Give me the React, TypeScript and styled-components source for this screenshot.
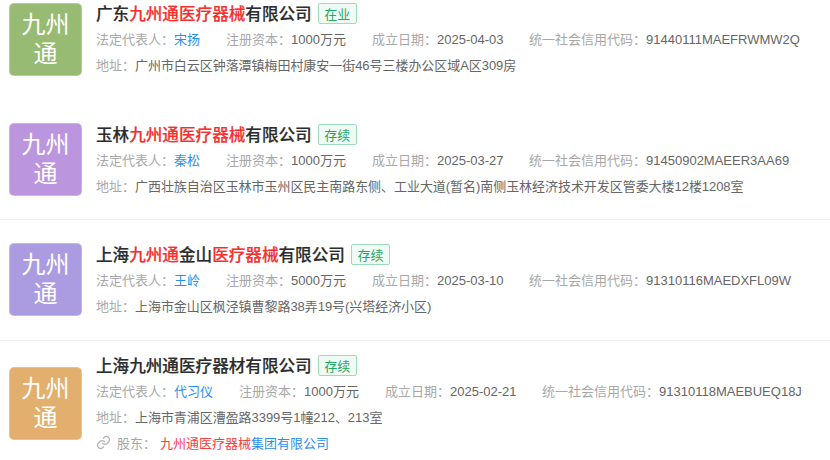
import React from "react";
import styled, { createGlobalStyle } from "styled-components";

const Global = createGlobalStyle`
  html, body { margin: 0; padding: 0; background: #fff; }
  body { width: 830px; height: 460px; overflow: hidden; font-family: "Noto Sans CJK SC", "Liberation Sans", sans-serif; }
`;
const List = styled.div`
  width: 830px; height: 460px; overflow: hidden; display: flex; flex-direction: column;
`;
const Row = styled.div<{ $h: number; $line?: boolean; $top: number }>`
  height: ${p => p.$h}px; flex: none; box-sizing: border-box; display: flex; align-items: flex-start; gap: 14px;
  padding: ${p => p.$top}px 0 0 9px;
  border-bottom: ${p => (p.$line ? "1px solid #eeeeee" : "none")};
`;
const Logo = styled.div<{ $c: string; $mt: number }>`
  width: 73px; height: 73px; flex: none; box-sizing: border-box; margin-top: ${p => p.$mt}px; border-radius: 5px; background: ${p => p.$c};
  border: 1px solid rgba(255,255,255,0.25); color: #fff; font-size: 24px; line-height: 29px; text-align: center;
  padding: 4px 8px 0;
`;
const Body = styled.div<{ $mt: number }>`
  display: flex; flex-direction: column; min-width: 0; margin-top: ${p => p.$mt}px;
`;
const TitleRow = styled.div`
  display: flex; align-items: center; height: 20px; gap: 6px;
`;
const Title = styled.div`
  font-size: 16.6px; font-weight: 500; -webkit-text-stroke: 0.2px #2c2c2c; color: #2c2c2c; line-height: 20px; white-space: nowrap;
  em { font-style: normal; color: #f5312f; -webkit-text-stroke: 0.2px #f5312f; }
`;
const Tag = styled.span`
  width: 39px; height: 21px; box-sizing: border-box; border: 1px solid #9bdcbd; border-radius: 2px; background: #f1fbf6;
  color: #1fa862; font-size: 13px; line-height: 19px; text-align: center;
`;
const Meta = styled.div`
  display: flex; margin-top: 6px; height: 20px; font-size: 13px; line-height: 20px; white-space: nowrap;
`;
const Pair = styled.span<{ $w?: number }>`
  flex: none; width: ${p => (p.$w ? `${p.$w}px` : "auto")}; color: #a8a8a8;
`;
const Val = styled.span`
  color: #666;
  font-family: "Liberation Sans", "Noto Sans CJK SC", sans-serif;
`;
const AddrVal = styled(Val)`
  letter-spacing: -0.05px;
`;
const Person = styled.a`
  color: #2b8ff0;
`;
const Addr = styled.div`
  margin-top: 6px; height: 20px; font-size: 13px; line-height: 20px; color: #a8a8a8; white-space: nowrap;
`;
const Holder = styled.div`
  margin-top: 5px; height: 20px; display: flex; align-items: center; font-size: 13px; color: #a8a8a8; white-space: nowrap;
  svg { margin-right: 6px; flex: none; }
`;
const HolderLink = styled.span`
  margin-left: 4px; color: #2b8ff0;
  em { font-style: normal; color: #f5413f; }
`;

type Item = {
  h: number; top: number; mt: number; bt: number; line?: boolean; color: string; title: React.ReactNode; tag: string;
  person: string; cap: string; date: string; code: string; addr: string; wide?: boolean; holder?: boolean;
};

const items: Item[] = [
  { h: 99, top: 3, mt: 0, bt: 0, color: "#97bb73", title: <>广东<em>九州通医疗器械</em>有限公司</>, tag: "在业", person: "宋扬", cap: "1000万元", date: "2025-04-03", code: "91440111MAEFRWMW2Q", addr: "广州市白云区钟落潭镇梅田村康安一街46号三楼办公区域A区309房" },
  { h: 121, top: 24, mt: 0, bt: 1, line: true, color: "#bb96de", title: <>玉林<em>九州通医疗器械</em>有限公司</>, tag: "存续", person: "秦松", cap: "1000万元", date: "2025-03-27", code: "91450902MAEER3AA69", addr: "广西壮族自治区玉林市玉州区民主南路东侧、工业大道(暂名)南侧玉林经济技术开发区管委大楼12楼1208室" },
  { h: 121, top: 23, mt: 0, bt: 1, line: true, color: "#ab9ce2", title: <>上海<em>九州通</em>金山<em>医疗器械</em>有限公司</>, tag: "存续", person: "王岭", cap: "5000万元", date: "2025-03-10", code: "91310116MAEDXFL09W", addr: "上海市金山区枫泾镇曹黎路38弄19号(兴塔经济小区)" },
  { h: 119, top: 14, mt: 12, bt: 0, color: "#e3af6e", title: <>上海九州通医疗器材有限公司</>, tag: "存续", person: "代习仪", cap: "1000万元", date: "2025-02-21", code: "91310118MAEBUEQ18J", addr: "上海市青浦区漕盈路3399号1幢212、213室", wide: true, holder: true },
];

const LinkIcon = () => (
  <svg width="15" height="15" viewBox="0 0 24 24" fill="none" stroke="#b5b5b5" strokeWidth="2" strokeLinecap="round" strokeLinejoin="round">
    <path d="M10 13a5 5 0 0 0 7.5.5l3-3a5 5 0 0 0-7-7l-1.7 1.7" />
    <path d="M14 11a5 5 0 0 0-7.5-.5l-3 3a5 5 0 0 0 7 7l1.7-1.7" />
  </svg>
);

export default function App() {
  return (
    <List>
      <Global />
      {items.map(it => (
        <Row key={it.code} $h={it.h} $top={it.top} $line={it.line}>
          <Logo $c={it.color} $mt={it.mt}>九州<br />通</Logo>
          <Body $mt={it.bt}>
            <TitleRow>
              <Title>{it.title}</Title>
              <Tag>{it.tag}</Tag>
            </TitleRow>
            <Meta>
              <Pair $w={it.wide ? 143 : 130}>法定代表人：<Person>{it.person}</Person></Pair>
              <Pair $w={146}>注册资本：<Val>{it.cap}</Val></Pair>
              <Pair $w={157}>成立日期：<Val>{it.date}</Val></Pair>
              <Pair>统一社会信用代码：<Val>{it.code}</Val></Pair>
            </Meta>
            <Addr>地址：<AddrVal>{it.addr}</AddrVal></Addr>
            {it.holder && (
              <Holder><LinkIcon />股东：<HolderLink><em>九州通医疗器械</em>集团有限公司</HolderLink></Holder>
            )}
          </Body>
        </Row>
      ))}
    </List>
  );
}
